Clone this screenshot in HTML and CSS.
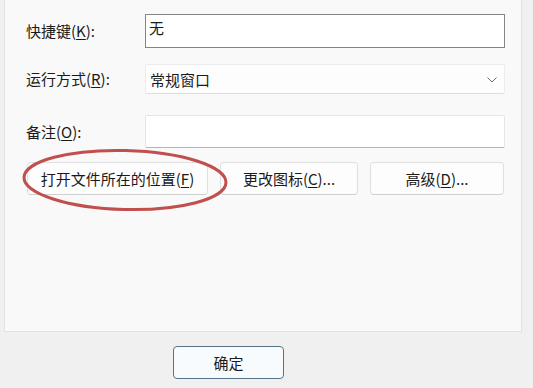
FILE: index.html
```html
<!DOCTYPE html>
<html lang="zh-CN">
<head>
  <meta charset="UTF-8">
  <title>快捷方式属性</title>
  <link rel="stylesheet" href="styles.css">
</head>
<body>
  <div class="panel">
    <div class="row row-key">
      <label class="label">快捷键(<u>K</u>):</label>
      <div class="textbox">无</div>
    </div>
    <div class="row row-run">
      <label class="label">运行方式(<u>R</u>):</label>
      <div class="select">
        <span>常规窗口</span>
        <svg class="chevron" width="10" height="6" viewBox="0 0 10 6">
          <path d="M0.5 0.5 L5 5 L9.5 0.5" fill="none" stroke="#6a6a6a" stroke-width="1"/>
        </svg>
      </div>
    </div>
    <div class="row row-note">
      <label class="label">备注(<u>O</u>):</label>
      <div class="notebox"></div>
    </div>
    <div class="buttons">
      <button class="btn btn-open">打开文件所在的位置(<u>F</u>)</button>
      <button class="btn btn-icon">更改图标(<u>C</u>)...</button>
      <button class="btn btn-adv">高级(<u>D</u>)...</button>
    </div>
    <svg class="mark" width="212" height="66" viewBox="0 0 212 66">
      <ellipse cx="106" cy="33" rx="101" ry="29.5" fill="none" stroke="#c0504e" stroke-width="3" transform="rotate(1.5 106 33)"/>
    </svg>
  </div>
  <div class="footer">
    <button class="ok">确定</button>
  </div>
</body>
</html>
```

FILE: styles.css
```css
body {
  margin: 0;
  background: #f0f0f0;
  font-family: "Noto Sans CJK SC", "Noto Sans", sans-serif;
  font-size: 15px;
  color: #1a1a1a;
  width: 533px;
  height: 388px;
  overflow: hidden;
}
u { text-decoration-thickness: 1px; text-underline-offset: 2px; }

.panel {
  position: relative;
  box-sizing: border-box;
  margin-left: 4px;
  width: 518px;
  height: 332px;
  padding: 14px 0 0 21px;
  background: #f9f9f9;
  border: 1px solid #e2e2e2;
  border-top: none;
}
.row {
  display: flex;
  align-items: center;
}
.label {
  width: 119px;
  flex: none;
  line-height: 20px;
}
.row-key { height: 34px; }
.row-run { height: 30px; margin-top: 16px; }
.row-note { height: 33px; margin-top: 21px; }

.textbox {
  box-sizing: border-box;
  width: 360px;
  height: 34px;
  background: #fff;
  border: 1px solid #858585;
  padding: 1px 3px;
  line-height: 24px;
}
.select {
  box-sizing: border-box;
  width: 360px;
  height: 30px;
  display: flex;
  align-items: center;
  justify-content: space-between;
  padding: 0 7px 0 4px;
  background: #fdfdfd;
  border: 1px solid #ececec;
  border-bottom-color: #dedede;
  border-radius: 2px;
}
.chevron { margin-top: 1px; }
.notebox {
  box-sizing: border-box;
  width: 360px;
  height: 33px;
  background: #fff;
  border: 1px solid #e6e6e6;
  border-bottom-color: #b5b5b5;
  border-radius: 2px;
}

.buttons {
  display: flex;
  margin: 14px 0 0 1px;
}
.btn {
  box-sizing: border-box;
  height: 33px;
  font: inherit;
  color: inherit;
  background: #fdfdfd;
  border: 1px solid #e0e0e0;
  border-bottom-color: #cfcfcf;
  border-radius: 4px;
  padding: 0;
}
.btn-open { width: 181px; }
.btn-icon { width: 138px; margin-left: 12px; }
.btn-adv { width: 134px; margin-left: 12px; }

.mark {
  position: absolute;
  left: 14px;
  top: 147px;
}

.footer {
  padding: 14px 0 0 173px;
}
.ok {
  box-sizing: border-box;
  width: 111px;
  height: 33px;
  font: inherit;
  color: inherit;
  background: #f7fbfd;
  border: 1px solid #557487;
  border-radius: 4px;
  padding: 0;
}
```
